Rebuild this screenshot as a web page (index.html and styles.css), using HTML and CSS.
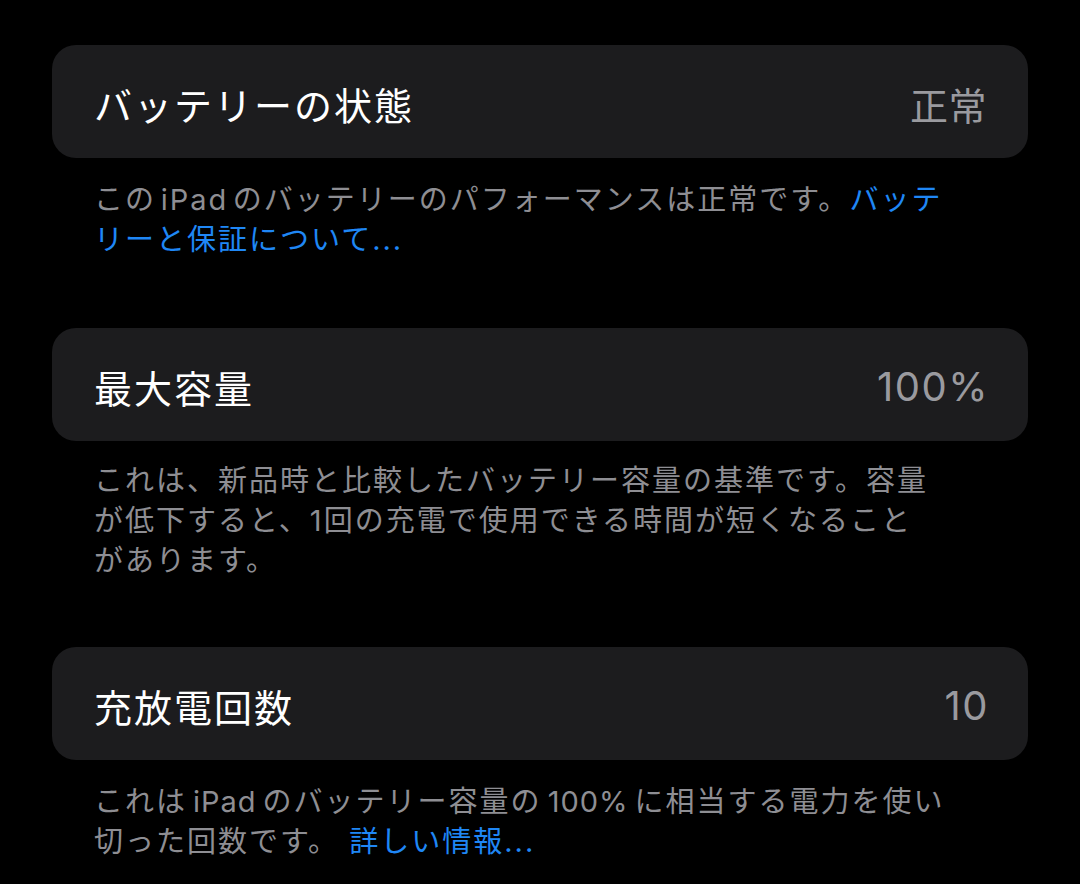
FILE: index.html
```html
<!DOCTYPE html>
<html lang="ja">
<head>
<meta charset="utf-8">
<title>バッテリー</title>
<link rel="stylesheet" href="styles.css">
</head>
<body>
<main class="page">
  <section class="group first">
    <div class="card">
      <span class="label">バッテリーの状態</span>
      <span class="value">正常</span>
    </div>
    <p class="footer">この&#8202;iPad&#8202;のバッテリーのパフォーマンスは正常です。<a class="link">バッテ<br>リーと保証について...</a></p>
  </section>
  <section class="group mid">
    <div class="card">
      <span class="label">最大容量</span>
      <span class="value num">100%</span>
    </div>
    <p class="footer">これは、新品時と比較したバッテリー容量の基準です。容量<br>が低下すると、1回の充電で使用できる時間が短くなること<br>があります。</p>
  </section>
  <section class="group">
    <div class="card">
      <span class="label">充放電回数</span>
      <span class="value num">10</span>
    </div>
    <p class="footer">これは<span class="tight">iPad</span>のバッテリー容量の<span class="tight">100%</span>に相当する電力を使い<br>切った回数です。 <a class="link">詳しい情報...</a></p>
  </section>
</main>
</body>
</html>
```

FILE: styles.css
```css
html, body {
  margin: 0;
  padding: 0;
  background: #000;
}
body {
  width: 1080px;
  height: 884px;
  overflow: hidden;
  font-family: "Inter", "Noto Sans CJK JP", sans-serif;
  -webkit-font-smoothing: antialiased;
}
.page {
  display: flex;
  flex-direction: column;
  gap: 66px;
  padding: 45px 52px 0 52px;
}
.group {
  display: flex;
  flex-direction: column;
}
.group.first {
  margin-bottom: 2px;
}
.card {
  height: 113px;
  box-sizing: border-box;
  background: #1c1c1e;
  border-radius: 24px;
  display: flex;
  align-items: center;
  justify-content: space-between;
  padding: 4px 42px 0 42px;
}
.label {
  color: #ffffff;
  font-size: 38px;
  letter-spacing: 2px;
}
.value {
  color: #9a9a9f;
  font-size: 38px;
  letter-spacing: 0.5px;
  margin-right: -1px;
}
.value.num {
  font-size: 40px;
  letter-spacing: 1.5px;
  margin-right: -3px;
}
.footer {
  margin: 22px 0 0 0;
  padding: 0 42px;
  color: #8e8e93;
  font-size: 29px;
  line-height: 40px;
  letter-spacing: 2px;
  white-space: nowrap;
}
.group.mid .footer {
  margin-top: 20px;
}
.tight {
  margin: 0 6px;
  letter-spacing: 1px;
}
.link {
  color: #1f87f5;
}
```
